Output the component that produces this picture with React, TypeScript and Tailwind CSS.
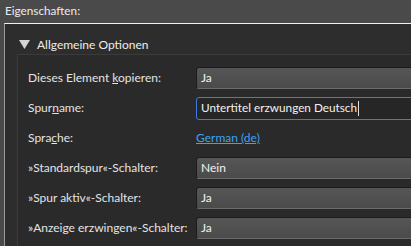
import React from "react";

const font = { fontFamily: 'Lato, "Noto Sans", sans-serif' };

function Combo({ value }: { value: string }) {
  return (
    <div className="h-[22px] w-[260px] shrink-0 rounded-[3px] border border-[#1c1c1c] border-b-[#6a6a6a] bg-gradient-to-b from-[#565656] to-[#4b4b4b] pl-[4px] text-[12px] leading-[20px] text-[#f2f2f2]">
      {value}
    </div>
  );
}

function Label({ children }: { children: React.ReactNode }) {
  return <div className="w-[168px] shrink-0 whitespace-nowrap text-[12px] text-[#e4e4e4]">{children}</div>;
}

function Row({ children }: { children: React.ReactNode }) {
  return <div className="flex h-[30px] items-center">{children}</div>;
}

export default function App() {
  return (
    <div
      className="flex h-[246px] w-[411px] flex-col overflow-hidden bg-[#4a4a4a]"
      style={font}
    >
      <div className="h-[23px] shrink-0 pl-[5px] pt-[3px] text-[11.75px] leading-[16px] text-[#ececec]">
        Eigenschaften:
      </div>
      <div className="ml-[4px] flex flex-1 flex-col border-l border-t border-l-[#9a9a9a] border-t-[#f0f0f0] bg-[#2d2d2d]">
        <div className="flex h-[30px] items-center pt-[11px]">
          <svg width="11" height="9" viewBox="0 0 11 9" className="ml-[14px] shrink-0">
            <path d="M0 0 H11 L5.5 9 Z" fill="#d4d4d4" />
          </svg>
          <span className="ml-[7px] text-[12px] text-[#ececec]">Allgemeine Optionen</span>
        </div>
        <div className="ml-[12px] flex-1 border-l border-t border-[#3b3b3b] bg-[#2a2a2a] pt-[8px] pl-[10px]">
          <Row>
            <Label>
              Dieses Element <span className="underline">k</span>opieren:
            </Label>
            <Combo value="Ja" />
          </Row>
          <Row>
            <Label>
              Spur<span className="underline">n</span>ame:
            </Label>
            <div className="flex h-[23px] w-[260px] shrink-0 items-center rounded-[3px] border border-[#3d7ae4] bg-[#262626] pl-[4px] text-[11.75px] text-[#f2f2f2]">
              Untertitel erzwungen Deutsch
              <span className="ml-[1px] inline-block h-[15px] w-[1px] bg-[#e0e0e0]" />
            </div>
          </Row>
          <Row>
            <Label>
              Spra<span className="underline">c</span>he:
            </Label>
            <span className="text-[12px] text-[#3ea2f2] underline">German (de)</span>
          </Row>
          <Row>
            <Label>»Standardspur«-Schalter:</Label>
            <Combo value="Nein" />
          </Row>
          <Row>
            <Label>»Spur aktiv«-Schalter:</Label>
            <Combo value="Ja" />
          </Row>
          <Row>
            <Label>»Anzeige erzwingen«-Schalter:</Label>
            <Combo value="Ja" />
          </Row>
        </div>
      </div>
    </div>
  );
}
